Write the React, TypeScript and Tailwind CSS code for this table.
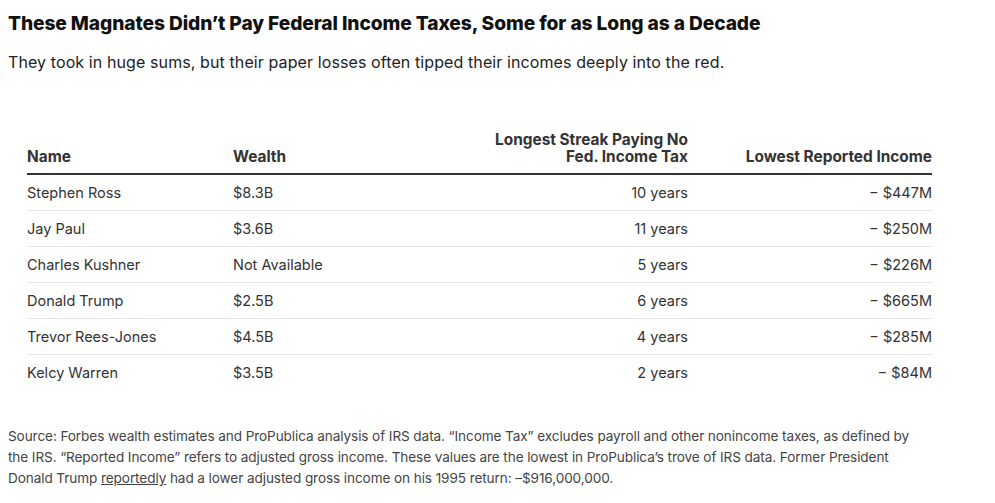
import React from "react";

type Row = { name: string; wealth: string; streak: string; lowest: string };

const rows: Row[] = [
  { name: "Stephen Ross", wealth: "$8.3B", streak: "10 years", lowest: "− $447M" },
  { name: "Jay Paul", wealth: "$3.6B", streak: "11 years", lowest: "− $250M" },
  { name: "Charles Kushner", wealth: "Not Available", streak: "5 years", lowest: "− $226M" },
  { name: "Donald Trump", wealth: "$2.5B", streak: "6 years", lowest: "− $665M" },
  { name: "Trevor Rees-Jones", wealth: "$4.5B", streak: "4 years", lowest: "− $285M" },
  { name: "Kelcy Warren", wealth: "$3.5B", streak: "2 years", lowest: "− $84M" },
];

const App: React.FC = () => {
  return (
    <div className="w-[995px] h-[503px] bg-white font-['Inter',sans-serif] overflow-hidden">
      <div className="px-2 pt-[10px]">
        <h1 className="text-[19.2px] leading-[26px] font-extrabold text-[#111] tracking-[-0.1px]">
          These Magnates Didn’t Pay Federal Income Taxes, Some for as Long as a Decade
        </h1>
        <p className="mt-[15px] text-[16px] leading-[22px] text-[#222] tracking-[0.1px]">
          They took in huge sums, but their paper losses often tipped their incomes deeply into the red.
        </p>
      </div>

      <div className="ml-[27px] w-[905px] mt-[58px] text-[#333]">
        <div className="grid grid-cols-[206px_1fr_200px_244px] items-end border-b-2 border-[#333] pb-[8px] text-[15.4px] leading-[17px] font-bold">
          <div>Name</div>
          <div>Wealth</div>
          <div className="text-right">
            Longest Streak Paying No
            <br />
            Fed. Income Tax
          </div>
          <div className="text-right">Lowest Reported Income</div>
        </div>
        {rows.map((r, i) => (
          <div
            key={r.name}
            className={`grid grid-cols-[206px_1fr_200px_244px] items-center h-[36px] text-[14.5px] ${
              i < rows.length - 1 ? "border-b border-[#e6e6e6]" : ""
            }`}
          >
            <div>{r.name}</div>
            <div>{r.wealth}</div>
            <div className="text-right">{r.streak}</div>
            <div className="text-right">{r.lowest}</div>
          </div>
        ))}
      </div>

      <p className="mx-2 mt-[35px] w-[912px] text-[13.6px] leading-[21px] tracking-[-0.1px] text-[#444]">
        Source: Forbes wealth estimates and ProPublica analysis of IRS data. “Income Tax” excludes payroll and other nonincome taxes, as defined by the IRS. “Reported Income” refers to adjusted gross income. These values are the lowest in ProPublica’s trove of IRS data. Former President Donald Trump{" "}
        <a className="underline">reportedly</a> had a lower adjusted gross income on his 1995 return: –$916,000,000.
      </p>
    </div>
  );
};

export default App;
